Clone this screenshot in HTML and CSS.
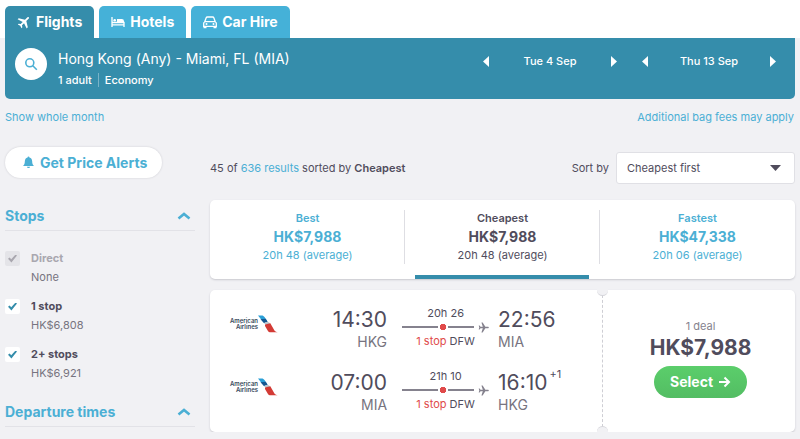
FILE: index.html
```html
<!DOCTYPE html>
<html lang="en">
<head>
<meta charset="utf-8">
<meta name="viewport" content="width=device-width, initial-scale=1">
<title>Hong Kong to Miami flights</title>
<link rel="stylesheet" href="styles.css">
</head>
<body>
<svg class="defs" aria-hidden="true">
  <symbol id="plane" viewBox="0 0 24 24"><path d="M22 10.400h-6L10.200 1H7.500l3 9.400H5.500L3.500 7.500H1.500L2.800 12l-1.300 4.500h2l2-2.900h5l-3 9.400h2.700l5.800-9.400h6a1.600 1.600 0 0 0 0-3.200z"/></symbol>
  <symbol id="chevron" viewBox="0 0 14 8"><path d="M1.500 6.500 7 2l5.500 4.500" fill="none" stroke="currentColor" stroke-width="2.600"/></symbol>
  <symbol id="prev" viewBox="0 0 6 11"><path d="M6 0v11L0 5.500z"/></symbol>
  <symbol id="next" viewBox="0 0 6 11"><path d="M0 0v11l6-5.500z"/></symbol>
  <symbol id="tail" viewBox="0 0 20 18">
    <path d="M0 .5h3.500c1.600 0 2.300.5 3 1.600L9.500 6.500 6 8z" fill="#2a9fd6"/>
    <path d="M2.500 4.300 7.700 3.800l1.900 3L6 8z" fill="#16568f"/>
    <path d="M6 8.200c1.800-1.900 5-1.700 6.500.3L8 9.800z" fill="#bcc5cd"/>
    <path d="M7 9.600 12.300 8.300l4 7c.6 1 1.700 1.700 3.500 2h-7c-1.500 0-2.300-.4-3-1.600L7 11z" fill="#d33b35"/>
  </symbol>
</svg>

<header class="top">
  <nav class="tabs">
    <a class="tab tab-active" href="#flights">
      <svg class="tab-icon" viewBox="0 0 24 24"><use href="#plane" transform="rotate(-45 12 12)"/></svg>Flights</a>
    <a class="tab" href="#hotels">
      <svg class="tab-icon" viewBox="0 0 14 14"><path d="M1 2v10M1 9.800h12V12M13 9.800V7.500H1" fill="none" stroke="#fff" stroke-width="1.300"/><circle cx="3.700" cy="5.200" r="1.300"/><path d="M6 4h4.800A2.200 2.200 0 0 1 13 6.200v1.600H6z"/></svg>Hotels</a>
    <a class="tab" href="#cars">
      <svg class="tab-icon" viewBox="0 0 14 14"><path d="M1.600 7 3.200 2.800Q3.500 2 4.400 2h5.200q.9 0 1.200.8L12.400 7q.9.400.9 1.300v3H.7v-3Q.7 7.400 1.600 7z" fill="none" stroke="#fff" stroke-width="1.300"/><path d="M2 6h10v1.200H2zM.5 11h3v2.200h-3zm10 0h3v2.200h-3z"/><circle cx="3.500" cy="9" r="1"/><circle cx="10.500" cy="9" r="1"/></svg>Car Hire</a>
  </nav>
</header>

<main class="page">
  <section class="trip">
    <button class="search" type="button" aria-label="Edit search"><svg viewBox="0 0 14 14"><circle cx="5.800" cy="5.800" r="4"/><path d="m8.800 8.800 4 4"/></svg></button>
    <div class="trip-text">
      <h1>Hong Kong (Any) - Miami, FL (MIA)</h1>
      <p class="trip-meta"><span>1 adult</span><span>Economy</span></p>
    </div>
    <div class="dates">
      <div class="date"><button type="button" aria-label="Earlier departure"><svg><use href="#prev"/></svg></button><span>Tue 4 Sep</span><button type="button" aria-label="Later departure"><svg><use href="#next"/></svg></button></div>
      <div class="date"><button type="button" aria-label="Earlier return"><svg><use href="#prev"/></svg></button><span>Thu 13 Sep</span><button type="button" aria-label="Later return"><svg><use href="#next"/></svg></button></div>
    </div>
  </section>

  <div class="links"><a href="#month">Show whole month</a><a href="#fees">Additional bag fees may apply</a></div>

  <div class="columns">
    <aside class="filters">
      <button class="alerts" type="button"><svg viewBox="0 0 12 14"><path d="M6 .5c.7 0 1 .4 1 1 2 .5 2.900 2 3 4 .1 2.500.4 3.500 2 5.200H0C1.600 9 1.900 8 2 5.500c.1-2 1-3.500 3-4 0-.6.300-1 1-1zM4.300 11.600h3.400a1.700 1.500 0 0 1-3.400 0z"/></svg>Get Price Alerts</button>
      <section>
        <h2><button class="fold" type="button">Stops<svg><use href="#chevron"/></svg></button></h2>
        <div class="options">
          <div class="option option-off"><input type="checkbox" id="direct" checked disabled><label for="direct">Direct</label><span>None</span></div>
          <div class="option"><input type="checkbox" id="one" checked><label for="one">1 stop</label><span>HK$6,808</span></div>
          <div class="option"><input type="checkbox" id="two" checked><label for="two">2+ stops</label><span>HK$6,921</span></div>
        </div>
      </section>
      <section>
        <h2><button class="fold" type="button">Departure times<svg><use href="#chevron"/></svg></button></h2>
      </section>
    </aside>

    <section class="results">
      <div class="toolbar">
        <p>45 of <a href="#all">636 results</a> sorted by <strong>Cheapest</strong></p>
        <div class="sort">
          <label for="sort">Sort by</label>
          <div class="select"><select id="sort"><option>Cheapest first</option></select><svg viewBox="0 0 11 6"><path d="M0 0h11L5.500 6z"/></svg></div>
        </div>
      </div>

      <div class="summary">
        <button type="button"><b>Best</b><strong>HK$7,988</strong><span>20h 48 (average)</span></button>
        <button type="button" class="current"><b>Cheapest</b><strong>HK$7,988</strong><span>20h 48 (average)</span></button>
        <button type="button"><b>Fastest</b><strong>HK$47,338</strong><span>20h 06 (average)</span></button>
      </div>

      <article class="ticket">
        <div class="legs">
          <div class="leg">
            <div class="airline"><span>American<br>Airlines</span><svg><use href="#tail"/></svg></div>
            <div class="from"><time>14:30</time><span>HKG</span></div>
            <div class="route"><span>20h 26</span><div class="track"><i></i><svg><use href="#plane"/></svg></div><span><em>1 stop</em> DFW</span></div>
            <div class="to"><time>22:56</time><span>MIA</span></div>
          </div>
          <div class="leg">
            <div class="airline"><span>American<br>Airlines</span><svg><use href="#tail"/></svg></div>
            <div class="from"><time>07:00</time><span>MIA</span></div>
            <div class="route"><span>21h 10</span><div class="track"><i></i><svg><use href="#plane"/></svg></div><span><em>1 stop</em> DFW</span></div>
            <div class="to"><time>16:10<sup>+1</sup></time><span>HKG</span></div>
          </div>
        </div>
        <div class="deal">
          <span>1 deal</span>
          <strong>HK$7,988</strong>
          <button type="button">Select<svg viewBox="0 0 12 12"><path d="M0 6h10M5.500 1.500 10 6l-4.500 4.500"/></svg></button>
        </div>
      </article>
    </section>
  </div>
</main>
</body>
</html>
```
FILE: styles.css
```css
* { box-sizing: border-box; }

body {
  margin: 0;
  background: #f1f1f4;
  color: #504c5c;
  font: 11px/16px Inter, "Liberation Sans", sans-serif;
  overflow: hidden;
}

h1, h2, p { margin: 0; }
a { color: #4bafd4; text-decoration: none; }
button { margin: 0; padding: 0; border: 0; background: none; color: inherit; font: inherit; cursor: pointer; }
svg { display: block; flex: none; fill: currentColor; }
.defs { position: absolute; width: 0; height: 0; }

.top { padding: 6px 5px 0; background: #fff; }
.tabs { display: flex; gap: 5px; }
.tab {
  display: flex;
  align-items: center;
  gap: 5px;
  height: 32px;
  padding: 0 12px;
  border-radius: 5px 5px 0 0;
  background: #45b1d8;
  color: #fff;
  font-size: 14px;
  font-weight: 700;
}
.tab-active { background: #358dab; }
.tab-icon { width: 14px; height: 14px; }

.page { padding: 0 5px; }
.trip {
  display: flex;
  align-items: flex-start;
  padding: 10px 19px 10px 10px;
  border-radius: 0 0 5px 5px;
  background: #358dab;
  color: #fff;
}
.search {
  display: grid;
  place-items: center;
  width: 32px;
  height: 32px;
  border-radius: 50%;
  background: #fff;
  color: #4bafd4;
}
.search svg { width: 14px; height: 14px; fill: none; stroke: currentColor; stroke-width: 1.600; }
.trip-text { flex: 1; padding-left: 11px; }
.trip h1 { font-size: 14px; line-height: 22px; font-weight: 400; }
.trip-meta { display: flex; line-height: 14px; padding: 3px 0 2px; font-size: 11px; font-weight: 500; }
.trip-meta span + span { margin-left: 6px; padding-left: 6px; border-left: 1px solid #78b3c8; }
.dates { display: flex; gap: 25px; padding-top: 5px; font-weight: 500; }
.date { display: flex; align-items: center; justify-content: space-between; width: 134px; }
.date svg { width: 6px; height: 11px; }

.links { display: flex; justify-content: space-between; padding: 10px 1px 0 0; }

.columns { display: grid; grid-template-columns: 190px 1fr; gap: 15px; padding-top: 22px; }

.alerts {
  display: flex;
  align-items: center;
  gap: 6px;
  height: 31px;
  padding: 0 15px 0 18px;
  border-radius: 16px;
  background: #fff;
  box-shadow: 0 0 2px #c8c8ce;
  color: #4bafd4;
  font-size: 14px;
  font-weight: 700;
}
.alerts svg { width: 11px; height: 13px; }
.filters section { padding-top: 23px; }
.filters section + section { padding-top: 15px; }
.filters h2 { border-bottom: 1px solid #e2e2e7; font-size: 14px; line-height: 16px; }
.fold {
  display: flex;
  align-items: center;
  justify-content: space-between;
  width: 100%;
  height: 29px;
  padding-right: 4px;
  color: #4bafd4;
  font-weight: 700;
}
.fold svg { width: 14px; height: 8px; }
.options { display: grid; gap: 12px; padding-top: 19px; }
.option { display: grid; grid-template-columns: 15px 1fr; column-gap: 11px; row-gap: 2px; line-height: 17px; }
.option label { font-weight: 700; }
.option span { grid-column: 2; color: #777480; }
.option input {
  appearance: none;
  align-self: center;
  width: 15px;
  height: 15px;
  margin: 0;
  border-radius: 2px;
  background: #fff;
  display: grid;
  place-items: center;
}
.option input::before {
  content: "";
  width: 9px;
  height: 8px;
  background: #358dab;
  clip-path: polygon(0 52%, 18% 36%, 36% 60%, 84% 0, 100% 14%, 38% 100%);
}
.option-off label { color: #a9a7af; }
.option-off input { background: #e4e4e8; }
.option-off input::before { background: #a9a7af; }

.toolbar { display: flex; align-items: center; justify-content: space-between; padding: 5px 0 16px; }
.toolbar strong { font-weight: 600; }
.sort { display: flex; align-items: center; gap: 7px; }
.select { position: relative; width: 179px; }
.select select {
  appearance: none;
  display: block;
  width: 100%;
  height: 32px;
  padding: 0 10px;
  border: 1px solid #e0e0e5;
  border-radius: 3px;
  background: #fff;
  color: inherit;
  font: inherit;
}
.select svg { position: absolute; top: 13px; right: 14px; width: 11px; height: 6px; pointer-events: none; }

.summary {
  display: grid;
  grid-template-columns: repeat(3, 1fr);
  border-radius: 5px;
  background: #fff;
  box-shadow: 0 1px 2px #c8c8ce;
}
.summary button {
  position: relative;
  display: flex;
  flex-direction: column;
  align-items: center;
  padding: 10px 0 17px;
  color: #4bafd4;
}
.summary b { font-weight: 600; }
.summary strong { font-size: 14px; line-height: 22px; font-weight: 700; }
.summary span { line-height: 14px; }
.summary .current { color: #504c5c; }
.summary button + button::before { content: ""; position: absolute; left: -1px; top: 10px; bottom: 15px; width: 1px; background: #dedee3; }
.summary .current::after { content: ""; position: absolute; left: 10px; right: 11px; bottom: 0; height: 4px; background: #358dab; }

.ticket {
  display: grid;
  grid-template-columns: 61fr 30fr;
  margin-top: 11px;
  border-radius: 5px;
  background: #fff;
  box-shadow: 0 1px 2px #c8c8ce;
}
.legs { display: grid; gap: 18px; padding: 16px 0 18px; }
.leg { display: grid; grid-template-columns: 50px 122fr 87px 113fr; padding-left: 20px; }
.airline { display: flex; align-items: flex-start; padding-top: 9px; }
.airline span { padding-top: 3px; width: 28px; color: #36495a; font-size: 6px; line-height: 6px; font-weight: 600; text-align: right; }
.airline svg { width: 20px; height: 18px; }
.from, .to { display: flex; flex-direction: column; }
.from { padding-right: 15px; text-align: right; }
.to { padding-left: 9px; }
.from span, .to span { color: #777480; font-size: 14px; line-height: 18px; }
time { font-size: 21px; line-height: 27px; }
sup { margin-left: 2px; font-size: 11px; line-height: 0; vertical-align: 12px; }
.route { display: flex; flex-direction: column; align-items: center; line-height: 14px; }
.route em { color: #e04a4a; font-style: normal; }
.track { display: flex; align-items: center; gap: 4px; height: 14px; color: #85828e; }
.track svg { width: 11px; height: 11px; }
.track i {
  width: 72px;
  height: 6px;
  background:
    radial-gradient(circle at 41px 3px, #e04a4a 0 2px, #e04a4a 3px, #fff 3px 5px, transparent 5px),
    linear-gradient(#85828e, #85828e) center / 100% 2px no-repeat;
}
.deal {
  position: relative;
  display: flex;
  flex-direction: column;
  align-items: center;
  justify-content: center;
  padding: 0 0 6px 3px;
  border-left: 1px dashed #ceced4;
}
.deal::before, .deal::after {
  content: "";
  position: absolute;
  left: -6px;
  width: 11px;
  height: 6px;
  background: #f1f1f4;
}
.deal::before { top: -1px; border-radius: 0 0 6px 6px; border-bottom: 1px solid #d4d4da; }
.deal::after { bottom: -1px; border-radius: 6px 6px 0 0; border-top: 1px solid #d4d4da; }
.deal span { color: #85828e; }
.deal strong { font-size: 21px; line-height: 28px; font-weight: 700; }
.deal button {
  display: flex;
  align-items: center;
  gap: 6px;
  height: 32px;
  margin-top: 4px;
  padding: 0 16px;
  border-radius: 16px;
  background: linear-gradient(#5bce6b, #53bd63);
  color: #fff;
  font-size: 14px;
  font-weight: 700;
}
.deal button svg { width: 12px; height: 12px; fill: none; stroke: currentColor; stroke-width: 2; }
```
